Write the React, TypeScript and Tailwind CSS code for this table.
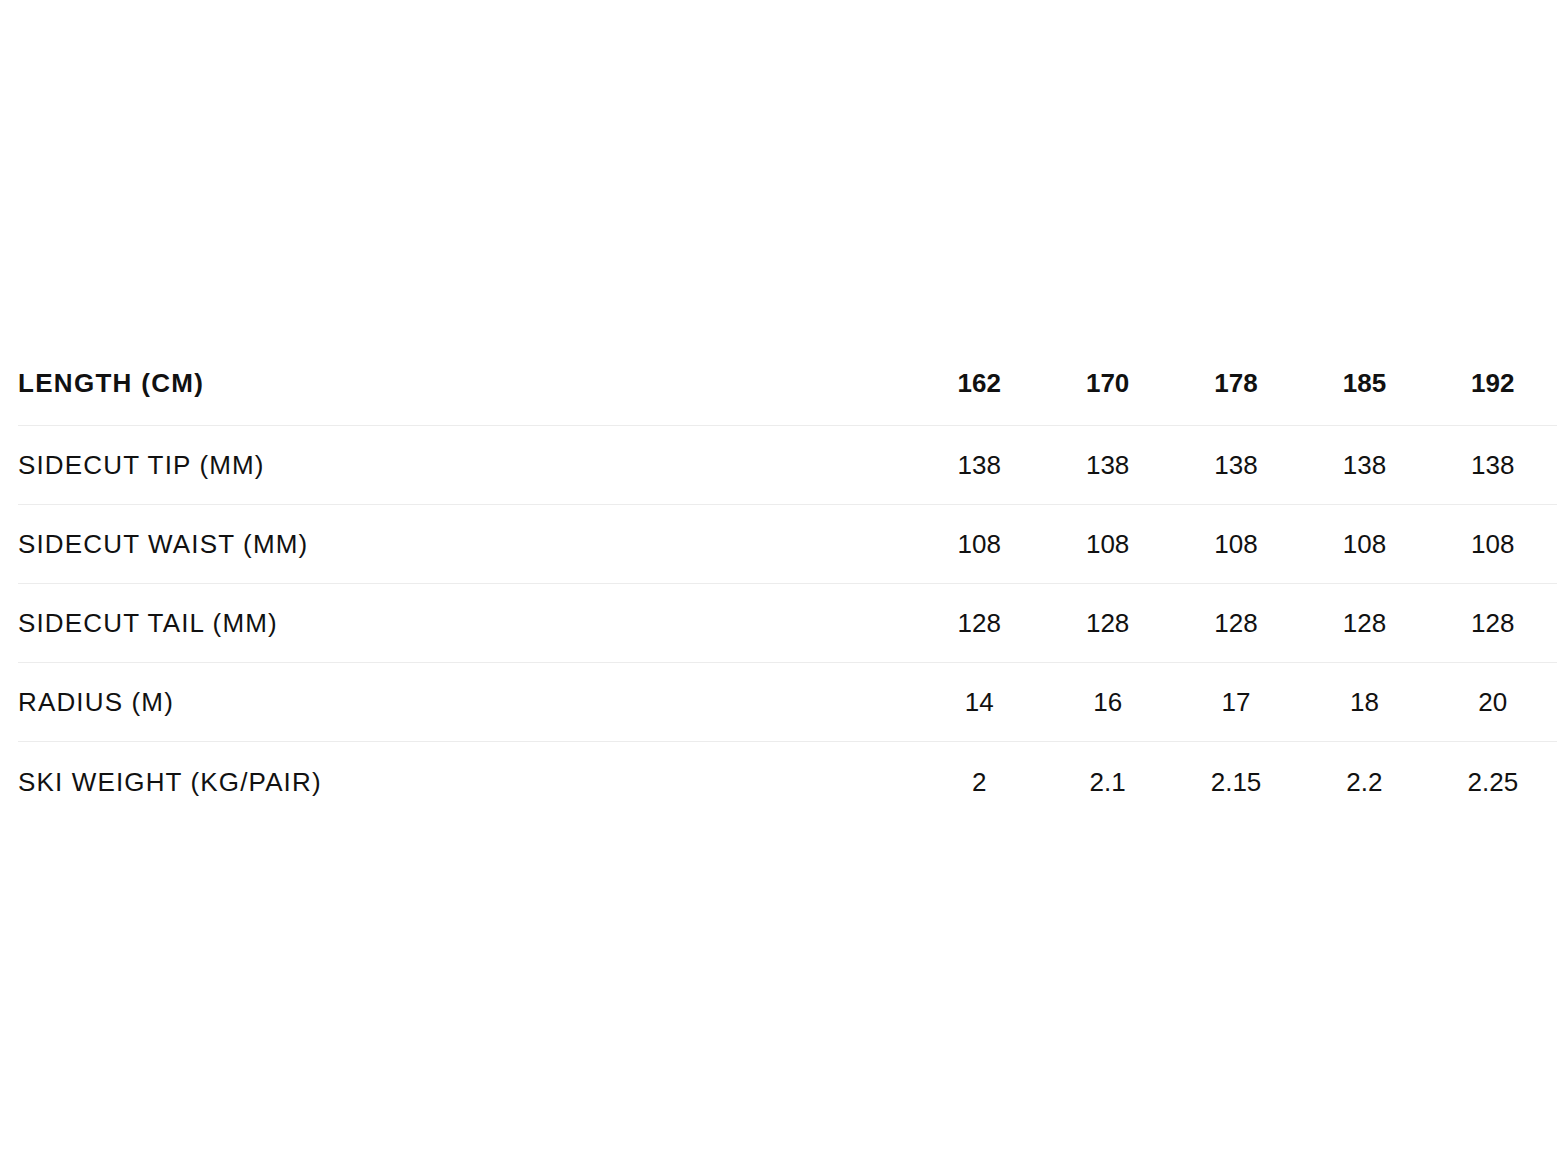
const SIZES = ["162", "170", "178", "185", "192"];

const ROWS: { label: string; values: string[] }[] = [
  { label: "SIDECUT TIP (MM)", values: ["138", "138", "138", "138", "138"] },
  { label: "SIDECUT WAIST (MM)", values: ["108", "108", "108", "108", "108"] },
  { label: "SIDECUT TAIL (MM)", values: ["128", "128", "128", "128", "128"] },
  { label: "RADIUS (M)", values: ["14", "16", "17", "18", "20"] },
  { label: "SKI WEIGHT (KG/PAIR)", values: ["2", "2.1", "2.15", "2.2", "2.25"] },
];

export default function App() {
  return (
    <div className="min-h-[1168px] w-[1557px] bg-white pl-[18px] pt-[340px] text-[26px] leading-[36px] text-[#111] [font-family:'Liberation_Sans',Arial,sans-serif]">
      <div className="grid h-[86px] grid-cols-[1fr_repeat(5,128.4px)] items-center border-b border-[#ececec] font-bold">
        <div className="tracking-[1.3px]">LENGTH (CM)</div>
        {SIZES.map((s) => (
          <div key={s} className="text-center">
            {s}
          </div>
        ))}
      </div>
      {ROWS.map((row, i) => (
        <div
          key={row.label}
          className={`grid h-[79px] grid-cols-[1fr_repeat(5,128.4px)] items-center ${
            i < ROWS.length - 1 ? "border-b border-[#ececec]" : ""
          }`}
        >
          <div className="tracking-[1.15px]">{row.label}</div>
          {row.values.map((v, j) => (
            <div key={j} className="text-center">
              {v}
            </div>
          ))}
        </div>
      ))}
    </div>
  );
}
